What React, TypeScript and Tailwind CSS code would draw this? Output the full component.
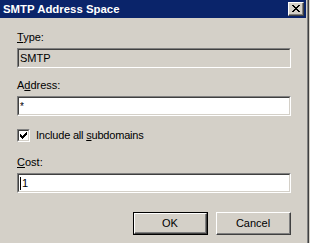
import React from 'react';

// Classic Win32 sunken edit box
const EditBox = ({ children, disabled }: { children?: React.ReactNode; disabled?: boolean }) => (
  <div className="w-[274px] h-[20px] border-t border-l border-t-[#808080] border-l-[#808080] border-b border-r border-b-white border-r-white">
    <div
      className={`h-full flex items-center pl-[1px] border-t border-l border-t-[#404040] border-l-[#404040] border-b border-r border-b-[#d4d0c8] border-r-[#d4d0c8] ${
        disabled ? 'bg-[#d4d0c8]' : 'bg-white'
      }`}
    >
      {children}
    </div>
  </div>
);

const Label = ({ children }: { children: React.ReactNode }) => (
  <div className="h-[13px] leading-[13px] text-black">{children}</div>
);

const Button = ({ label, isDefault }: { label: string; isDefault?: boolean }) => (
  <div className={`w-[75px] h-[23px] ${isDefault ? 'border border-black' : ''}`}>
    <div className="h-full border-t border-l border-t-white border-l-white border-b border-r border-b-[#404040] border-r-[#404040]">
      <div className="h-full flex items-center justify-center border-b border-r border-b-[#808080] border-r-[#808080] text-black">
        {label}
      </div>
    </div>
  </div>
);

// 7x7 pixel tick used by the classic checkbox
const checkRows = ['......x', '.....xx', 'x...xxx', 'xx.xxx.', 'xxxxx..', '.xxx...', '..x....'];
// 8x7 pixel close glyph
const closeRows = ['xx....xx', '.xx..xx.', '..xxxx..', '...xx...', '..xxxx..', '.xx..xx.', 'xx....xx'];

const PixelGlyph = ({ rows }: { rows: string[] }) => (
  <svg width={rows[0].length} height={rows.length} shapeRendering="crispEdges">
    {rows.map((row, y) =>
      row.split('').map((c, x) => (c === 'x' ? <rect key={`${x}-${y}`} x={x} y={y} width={1} height={1} fill="#000" /> : null))
    )}
  </svg>
);

const Checkbox = () => (
  <div className="w-[13px] h-[13px] border-t border-l border-t-[#808080] border-l-[#808080] border-b border-r border-b-white border-r-white">
    <div className="h-full flex items-center justify-center bg-white border-t border-l border-t-[#404040] border-l-[#404040] border-b border-r border-b-[#d4d0c8] border-r-[#d4d0c8]">
      <PixelGlyph rows={checkRows} />
    </div>
  </div>
);

const App = () => {
  return (
    <div className="flex w-[310px] h-[243px] bg-[#d4d0c8] font-['Liberation_Sans',Arial,sans-serif] text-[11px] overflow-hidden">
      <div className="flex w-[309px] border-r border-r-[#404040]">
        <div className="flex-1 flex flex-col border-r border-r-[#808080] pr-px">
          {/* Title bar */}
          <div className="h-[18px] bg-[#0a246a] flex items-center justify-between pl-[3px] pr-[2px]">
            <span className="text-white font-bold text-[11.4px] leading-[13px]">SMTP Address Space</span>
            <div className="w-[16px] h-[14px] border-t border-l border-t-white border-l-white border-b border-r border-b-[#404040] border-r-[#404040] bg-[#d4d0c8]">
              <div className="h-full flex items-center justify-center border-b border-r border-b-[#808080] border-r-[#808080]">
                <PixelGlyph rows={closeRows} />
              </div>
            </div>
          </div>

          {/* Dialog body */}
          <div className="flex flex-col pl-[17px]">
            <div className="mt-[13px]">
              <Label>
                <span className="underline">T</span>ype:
              </Label>
            </div>
            <div className="mt-[4px]">
              <EditBox disabled>
                <span className="text-black">SMTP</span>
              </EditBox>
            </div>

            <div className="mt-[11px]">
              <Label>
                A<span className="underline">d</span>dress:
              </Label>
            </div>
            <div className="mt-[4px]">
              <EditBox>
                <span className="text-black text-[10px] self-start mt-[1px]">*</span>
              </EditBox>
            </div>

            <div className="mt-[13px] flex items-center h-[13px]">
              <Checkbox />
              <span className="ml-[6px] text-black tracking-[-0.2px]">
                Include all <span className="underline">s</span>ubdomains
              </span>
            </div>

            <div className="mt-[14px]">
              <Label>
                <span className="underline">C</span>ost:
              </Label>
            </div>
            <div className="mt-[4px]">
              <EditBox>
                <span className="w-px h-[13px] bg-black mr-px" />
                <span className="text-black">1</span>
              </EditBox>
            </div>

            <div className="mt-[19px] w-[274px] flex justify-end gap-[8px]">
              <Button label="OK" isDefault />
              <Button label="Cancel" />
            </div>
          </div>
        </div>
      </div>
    </div>
  );
};

export default App;
